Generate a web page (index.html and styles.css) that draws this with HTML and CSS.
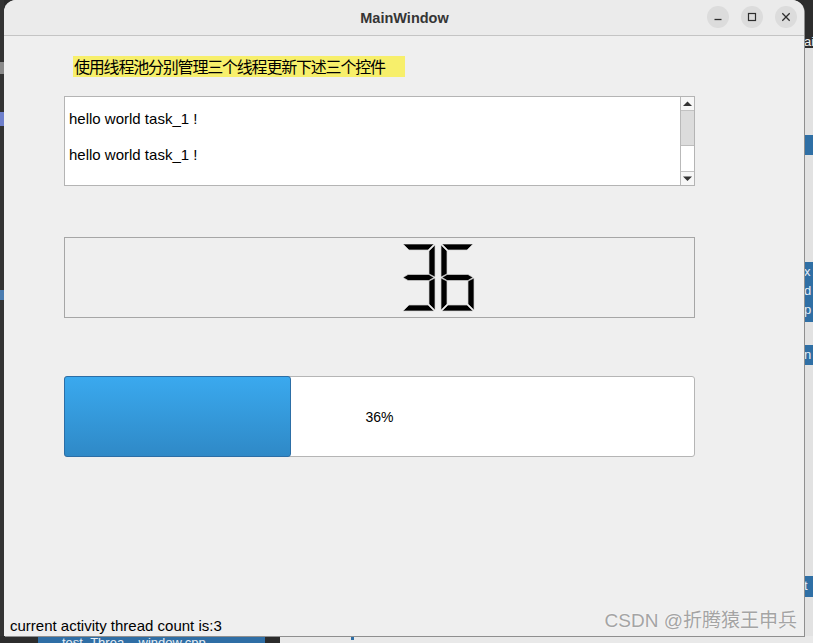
FILE: index.html
```html
<!DOCTYPE html>
<html lang="zh">
<head>
    <meta charset="UTF-8">
    <title>MainWindow</title>
    <link rel="stylesheet" href="styles.css">
</head>
<body>

<!-- desktop behind the window -->
<div class="side-left">
    <span class="bit bit-a"></span>
    <span class="bit bit-b"></span>
    <span class="bit bit-c"></span>
</div>
<div class="side-right">
    <div class="side-top">ai</div>
    <div class="side-tab tab-1"></div>
    <div class="side-tab tab-2">x<br>d<br>p</div>
    <div class="side-tab tab-3">n</div>
    <div class="side-tab tab-4">t</div>
</div>
<div class="dock">
    <div class="dock-gap"></div>
    <div class="dock-item">test_Threa... window.cpp</div>
    <div class="dock-dark"></div>
    <div class="dock-light"><span class="dock-dot"></span></div>
</div>

<div class="window">
    <div class="titlebar">
        <span class="title">MainWindow</span>
        <div class="controls">
            <span class="ctl">
                <svg width="22" height="22" viewBox="0 0 22 22"><line x1="7.5" y1="13.5" x2="14.5" y2="13.5" stroke="#2e2e2e" stroke-width="1.3"/></svg>
            </span>
            <span class="ctl">
                <svg width="22" height="22" viewBox="0 0 22 22"><rect x="7.5" y="7.5" width="7" height="7" fill="none" stroke="#2e2e2e" stroke-width="1.2"/></svg>
            </span>
            <span class="ctl">
                <svg width="22" height="22" viewBox="0 0 22 22"><path d="M7.3 7.3 L14.7 14.7 M14.7 7.3 L7.3 14.7" stroke="#2e2e2e" stroke-width="1.3"/></svg>
            </span>
        </div>
    </div>

    <div class="central">
        <div class="label">使用线程池分别管理三个线程更新下述三个控件</div>

        <div class="textedit">
            <div class="text">
                <p>hello world task_1 !</p>
                <p>hello world task_1 !</p>
            </div>
            <div class="scrollbar">
                <div class="sb-btn sb-up">
                    <svg width="9" height="6" viewBox="0 0 9 6"><polygon points="0,5 9,5 4.5,0.5" fill="#333"/></svg>
                </div>
                <div class="sb-thumb"></div>
                <div class="sb-track"></div>
                <div class="sb-btn sb-down">
                    <svg width="9" height="6" viewBox="0 0 9 6"><polygon points="0,0.5 9,0.5 4.5,5" fill="#333"/></svg>
                </div>
            </div>
        </div>

        <div class="lcd">
            <svg width="73" height="68" viewBox="0 0 73 68">
                <g fill="#000" stroke="#d4d4d4" stroke-width="0.7">
                    <!-- 3 -->
                    <polygon points="1,0 32,0 26,6 7,6"/>
                    <polygon points="33,1 33,33 27,30 27,7"/>
                    <polygon points="1,33.5 6,30.5 27,30.5 32,33.5 27,36.5 6,36.5"/>
                    <polygon points="33,34 33,66 27,60 27,37"/>
                    <polygon points="1,67 7,61 26,61 32,67"/>
                    <!-- 6 -->
                    <g transform="translate(39,0)">
                        <polygon points="1,0 32,0 26,6 7,6"/>
                        <polygon points="0,1 6,7 6,30 0,33"/>
                        <polygon points="1,33.5 6,30.5 27,30.5 32,33.5 27,36.5 6,36.5"/>
                        <polygon points="0,34 6,37 6,60 0,66"/>
                        <polygon points="33,34 33,66 27,60 27,37"/>
                        <polygon points="1,67 7,61 26,61 32,67"/>
                    </g>
                </g>
            </svg>
        </div>

        <div class="progress">
            <div class="chunk"></div>
            <span class="percent">36%</span>
        </div>
    </div>

    <div class="statusbar">current activity thread count is:3</div>
</div>

<div class="watermark">CSDN @折腾猿王申兵</div>

</body>
</html>
```

FILE: styles.css
```css
body {
    margin: 0;
    width: 813px;
    height: 643px;
    overflow: hidden;
    position: relative;
    background-color: #2c2c2c;
    font-family: "Liberation Sans", "Noto Sans CJK SC", sans-serif;
    color: #000;
}

/* desktop bits around the window */
.side-left {
    position: absolute;
    left: 0;
    top: 0;
    width: 4px;
    height: 643px;
    background-color: #333;
}
.bit {
    position: absolute;
    left: 0;
    width: 4px;
    display: block;
}
.bit-a { top: 62px; height: 12px; background-color: #8a8a8a; }
.bit-b { top: 112px; height: 14px; background-color: #6f80cc; }
.bit-c { top: 290px; height: 10px; background-color: #4a7cb0; }

.side-right {
    position: absolute;
    right: 0;
    top: 0;
    width: 9px;
    height: 643px;
    background-color: #e2e2e2;
    overflow: hidden;
}
.side-top {
    height: 48px;
    background-color: #2d2d2d;
    color: #eee;
    font-size: 13px;
    line-height: 84px;
}
.side-tab {
    position: absolute;
    left: 0;
    width: 9px;
    background-color: #2f6fa5;
    color: #e8eef5;
    font-size: 13px;
    line-height: 19px;
}
.tab-1 { top: 135px; height: 20px; }
.tab-2 { top: 262px; height: 60px; }
.tab-3 { top: 345px; height: 20px; }
.tab-4 { top: 576px; height: 21px; }

.dock {
    position: absolute;
    left: 0;
    bottom: 0;
    width: 813px;
    height: 7px;
    display: flex;
}
.dock-gap { width: 38px; background-color: #2d2d2d; }
.dock-item {
    width: 227px;
    background-color: #2f6ea5;
    color: #e8eef5;
    font-size: 13px;
    line-height: 13px;
    padding-left: 24px;
    box-sizing: border-box;
    overflow: hidden;
}
.dock-dark { width: 15px; background-color: #2b2b2b; }
.dock-light {
    flex: 1;
    background-color: #e9e9e9;
}
.dock-dot {
    display: block;
    margin-left: 71px;
    width: 3px;
    height: 4px;
    background-color: #2f6ea5;
}

/* the window */
.window {
    position: absolute;
    left: 4px;
    top: 0;
    width: 800px;
    height: 636px;
    background-color: #efefef;
    border-radius: 12px 12px 0 0;
    box-shadow: 1px 1px 0 #8f8f8f;
    display: flex;
    flex-direction: column;
    overflow: hidden;
}
.titlebar {
    height: 35px;
    flex-shrink: 0;
    background-color: #ebebeb;
    border-bottom: 1px solid #c4c4c4;
    display: flex;
    align-items: center;
    justify-content: center;
    position: relative;
}
.title {
    font-weight: bold;
    font-size: 14.5px;
    color: #353535;
    margin-left: 1px;
}
.controls {
    position: absolute;
    right: 7px;
    top: 6px;
    display: flex;
    gap: 12px;
}
.ctl {
    width: 22px;
    height: 22px;
    border-radius: 50%;
    background-color: #dcdcdc;
    display: block;
}
.ctl svg { display: block; }

.central {
    flex: 1;
    padding: 20px 0 0 60px;
    display: flex;
    flex-direction: column;
    align-items: flex-start;
}
.label {
    margin-left: 9px;
    width: 332px;
    height: 21px;
    box-sizing: border-box;
    padding-left: 1px;
    background-color: #f7ef6b;
    font-family: "Noto Sans CJK SC", sans-serif;
    font-size: 16px;
    line-height: 21px;
    letter-spacing: -1.2px;
    white-space: nowrap;
}

.textedit {
    margin-top: 19px;
    width: 631px;
    height: 90px;
    box-sizing: border-box;
    border: 1px solid #b4b4b4;
    background-color: #fff;
    display: flex;
}
.text {
    flex: 1;
    padding: 13px 5px 0 4px;
    font-size: 15px;
    line-height: 18px;
}
.text p {
    margin: 0 0 18px 0;
}
.scrollbar {
    width: 14px;
    box-sizing: border-box;
    border-left: 1px solid #b9b9b9;
    display: flex;
    flex-direction: column;
    background-color: #fff;
}
.sb-btn {
    height: 13px;
    display: flex;
    align-items: center;
    justify-content: center;
    background-color: #f7f7f7;
}
.sb-up { border-bottom: 1px solid #c2c2c2; }
.sb-down { border-top: 1px solid #c2c2c2; }
.sb-thumb {
    height: 34px;
    background-color: #dcdcdc;
    border-bottom: 1px solid #bdbdbd;
}
.sb-track { flex: 1; }

.lcd {
    margin-top: 51px;
    width: 631px;
    height: 81px;
    box-sizing: border-box;
    border: 1px solid #a6a6a6;
    display: flex;
    align-items: center;
    padding-left: 337px;
}
.lcd svg { display: block; }

.progress {
    margin-top: 58px;
    width: 631px;
    height: 81px;
    box-sizing: border-box;
    border: 1px solid #b5b5b5;
    border-radius: 3px;
    background-color: #fff;
    display: grid;
    align-items: center;
}
.chunk {
    grid-area: 1 / 1;
    align-self: stretch;
    margin: -1px;
    width: 227px;
    box-sizing: border-box;
    border: 1px solid #2c6ea6;
    border-radius: 3px;
    background: linear-gradient(#3aa9ee, #2f89c7);
}
.percent {
    grid-area: 1 / 1;
    justify-self: center;
    font-size: 14px;
    margin-top: 1px;
}

.statusbar {
    height: 22px;
    flex-shrink: 0;
    display: flex;
    align-items: center;
    padding-left: 6px;
    font-size: 15px;
}

.watermark {
    position: absolute;
    right: 16px;
    top: 608px;
    font-size: 19px;
    line-height: 26px;
    color: #a4a4a4;
    text-shadow: 0 0 2px #fff;
    white-space: nowrap;
}
```
